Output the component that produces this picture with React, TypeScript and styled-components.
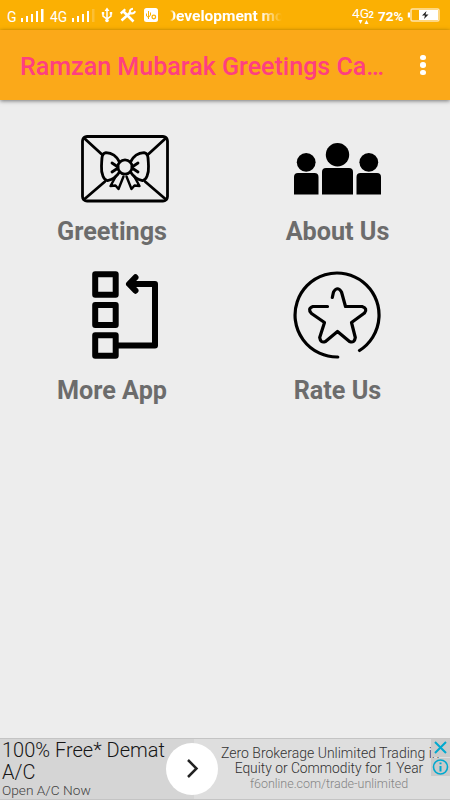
import React from "react";
import styled, { createGlobalStyle } from "styled-components";

const GlobalStyle = createGlobalStyle`
  * { box-sizing: border-box; }
  html, body { margin: 0; padding: 0; }
  body { font-family: Roboto, "Liberation Sans", sans-serif; background: #ededed; }
  svg { display: block; flex: none; }
`;

const Screen = styled.div`
  width: 450px;
  height: 800px;
  display: flex;
  flex-direction: column;
  overflow: hidden;
  background: #ededed;
`;

const StatusBar = styled.header`
  height: 30px;
  flex: none;
  display: flex;
  align-items: flex-start;
  background: #fbb003;
  color: #fff;
`;

const StatusText = styled.span<{ $left: number; $width: number; $size: number; $weight?: number; $top?: number }>`
  margin-left: ${(p) => p.$left}px;
  margin-top: ${(p) => p.$top ?? 7}px;
  width: ${(p) => p.$width}px;
  flex: none;
  font-size: ${(p) => p.$size}px;
  font-weight: ${(p) => p.$weight ?? 400};
  line-height: 18px;
  white-space: nowrap;
`;

const Ticker = styled.span`
  display: flex;
  width: 112px;
  margin: 7px 0 0 11px;
  overflow: hidden;
  font-size: 15.5px;
  font-weight: 700;
  line-height: 18px;
  white-space: nowrap;
  mask-image: linear-gradient(to right, transparent 0, #000 4px, #000 90px, transparent 112px);
`;

const TickerText = styled.span`
  margin-left: -4px;
`;

const StatusIcon = styled.svg<{ $left: number }>`
  margin-left: ${(p) => p.$left}px;
`;

const AppBar = styled.div`
  height: 70px;
  flex: none;
  display: flex;
  align-items: center;
  padding: 4px 24px 0 20px;
  background: #fba919;
  box-shadow: 0 1px 4px rgba(0, 0, 0, 0.5);
`;

const Title = styled.h1`
  margin: 0;
  flex: 1;
  color: #ff3f80;
  font-size: 25.05px;
  font-weight: 500;
  line-height: 32px;
  white-space: nowrap;
`;

const MenuButton = styled.button`
  display: flex;
  flex-direction: column;
  gap: 2px;
  padding: 0;
  margin-top: -4px;
  border: 0;
  background: none;
`;

const Dot = styled.i`
  width: 5.6px;
  height: 5.6px;
  border-radius: 50%;
  background: #fff;
`;

const Menu = styled.main`
  flex: 1;
  display: grid;
  grid-template-columns: 224px 227px;
  grid-template-rows: 159px 159px;
  padding-top: 20px;
`;

const Item = styled.div`
  display: flex;
  flex-direction: column;
  align-items: center;
`;

const ItemIcon = styled.svg<{ $shift?: number; $rise?: number }>`
  margin: ${(p) => 4 - (p.$rise ?? 0)}px 0 ${(p) => p.$rise ?? 0}px ${(p) => p.$shift ?? 0}px;
`;

const Label = styled.span`
  margin-top: 1.6px;
  color: #6c6c6c;
  font-size: 25.2px;
  font-weight: 700;
  line-height: 32px;
  white-space: nowrap;
`;

const Ad = styled.footer`
  position: relative;
  height: 62px;
  flex: none;
  display: flex;
  border-top: 1px solid #c4c4c4;
  border-bottom: 1px solid #c4c4c4;
  font-weight: 300;
  white-space: nowrap;
`;

const AdLead = styled.div`
  width: 194px;
  padding-left: 2px;
  background: #d5d5d5;
  color: #161616;
`;

const AdHeadline = styled.div`
  font-size: 20px;
  line-height: 22px;
`;

const AdNote = styled.div`
  color: #444;
  font-size: 13.7px;
  line-height: 15px;
`;

const AdBody = styled.div`
  flex: 1;
  display: flex;
  flex-direction: column;
  align-items: center;
  padding: 7px 0 0 14px;
  background: #dedede;
  color: #333;
  font-size: 13.8px;
  line-height: 15px;
  overflow: hidden;
`;

const AdLine = styled.div<{ $muted?: boolean }>`
  color: ${(p) => (p.$muted ? "#858585" : "#303030")};
  font-size: ${(p) => (p.$muted ? 12.5 : 13.8)}px;
  letter-spacing: ${(p) => (p.$muted ? -0.02 : 0)}px;
`;

const AdClip = styled.div`
  width: 216px;
  font-size: 14px;
`;

const AdGo = styled.button`
  position: absolute;
  left: 166px;
  top: 4px;
  width: 52px;
  height: 52px;
  padding: 0;
  border: 0;
  border-radius: 50%;
  background: #fff;
`;

const AdControls = styled.div`
  position: absolute;
  top: 0;
  right: 0;
  display: grid;
  gap: 1px;
`;

const AdControl = styled.span`
  width: 19px;
  height: 18px;
  background: #cacaca;
`;

function SignalBars({ left, weak }: { left: number; weak?: boolean }) {
  return (
    <StatusIcon $left={left} width="23" height="30" fill="#fff">
      <rect x="0" y="18" width="2" height="4" />
      <rect x="5" y="16" width="2" height="6" />
      <rect x="10" y="14" width="2" height="8" />
      <rect x="15" y="11" width="2" height="11" />
      <rect x="20" y="9" width="2.500" height="13" opacity={weak ? 0.2 : 1} />
    </StatusIcon>
  );
}

function EnvelopeIcon() {
  return (
    <ItemIcon $shift={26} width="90" height="90" viewBox="80 124 90 90" fill="none" stroke="#000" strokeWidth="2.800" strokeLinejoin="round" strokeLinecap="round">
      <rect x="82.500" y="136.500" width="85" height="64.500" rx="4.500" />
      <path d="M84 138 102 154.500M166 138 148 154.500M84 199.500 105 181.500M166 199.500 145 181.500" />
      <circle cx="125" cy="167" r="7.200" />
      <path d="M119.500 162C117 157 112 153 106 152.700C101 153.500 102 159 101.500 166C101 174 104 180.500 107.500 180.700C113 179.500 117 176 119.500 172M130.500 162C133 157 138 153 144 152.700C149 153.500 148 159 148.500 166C149 174 146 180.500 142.500 180.700C137 179.500 133 176 130.500 172" />
      <path d="M112 163 118 167M112 172 118 168M138 163 132 167M138 172 132 168" />
      <path d="M116 176 110.500 186 115.500 185.500 118.500 189 123.500 176.500M134 176 139.500 186 134.500 185.500 131.500 189 126.500 176.500" strokeWidth="2.400" />
    </ItemIcon>
  );
}

function PeopleIcon() {
  return (
    <ItemIcon width="90" height="90" viewBox="293 124 90 90">
      <circle cx="306.200" cy="162.300" r="9.400" />
      <circle cx="337.500" cy="154.700" r="11.700" />
      <circle cx="368.800" cy="162.300" r="9.400" />
      <path d="M294 194.500V177q0-4 4-4h16.500q4 0 4 4v17.500zM322 194.500V172q0-4 4-4h23q4 0 4 4v22.500zM356.500 194.500V177q0-4 4-4H377q4 0 4 4v17.500z" />
    </ItemIcon>
  );
}

function FlowIcon() {
  return (
    <ItemIcon $shift={26} $rise={13} width="90" height="90" viewBox="80 270 90 90" fill="none" stroke="#000" strokeWidth="6" strokeLinejoin="round" strokeLinecap="round">
      <rect x="95.200" y="274.200" width="20.500" height="20.500" />
      <rect x="95.200" y="305" width="20.500" height="20" />
      <rect x="95.200" y="335.300" width="20.500" height="20.500" />
      <path d="M118 345.500H155V284H130M135.500 277.300 129 284 135.500 290.700" />
    </ItemIcon>
  );
}

function StarIcon() {
  return (
    <ItemIcon $rise={13} width="90" height="90" viewBox="293 270 90 90" fill="none" stroke="#000" strokeWidth="3.200" strokeLinejoin="round" strokeLinecap="round">
      <path d="M337.800 357A42 42 0 1 1 359.500 350.500" />
      <path d="M332.300 297.500 333.500 292Q337.500 285.500 341.500 292L345.500 306.500H362Q368 308.500 364.500 313L351.500 322.500 355.300 337.500Q354.500 343.500 349.500 341.500L337.500 331.500 325.500 341.500Q320.500 343.500 319.700 337.500L324.500 322.500 311.500 313.500Q307 308.500 313 306.500H327.500" />
    </ItemIcon>
  );
}

export default function App() {
  return (
    <>
      <GlobalStyle />
      <Screen>
        <StatusBar>
          <StatusText $left={7} $width={14} $size={14} $top={8}>G</StatusText>
          <SignalBars left={0} />
          <StatusText $left={6} $width={22} $size={13.8} $top={8}>4G</StatusText>
          <SignalBars left={0} weak />
          <StatusIcon $left={6} width="12" height="30" viewBox="101 0 12 30" fill="none" stroke="#fff" strokeWidth="1.500">
            <path d="M107 10V21M103 13V16L107 19 111 16V12.500" />
            <path d="M104.500 11 107 7.500 109.500 11zM101.800 12h2.400v2.500h-2.400zM109.800 12h2.400v2.500h-2.400z" fill="#fff" stroke="none" />
            <circle cx="107" cy="20.500" r="1.800" fill="#fff" stroke="none" />
          </StatusIcon>
          <StatusIcon $left={6} width="18" height="30" viewBox="119 0 18 30" fill="none" stroke="#fff" strokeWidth="2.600">
            <path d="M121.500 20.500 131 12M123.500 11.500 133.500 21.500" />
            <path d="M120 12.500 124.500 8.500 126 10 121.500 14.500z" fill="#fff" stroke="none" />
            <path d="M133 8.800Q129.500 9 129.800 13Q133.500 14.500 135.300 11.300" strokeWidth="2" />
          </StatusIcon>
          <StatusIcon $left={6} width="16" height="30" viewBox="143 0 16 30">
            <rect x="144" y="8" width="14" height="14" rx="2.500" fill="#fff" />
            <path d="M148.500 11V19M146.500 13.500V16L148.500 17.500 150.500 15V12.500" fill="none" stroke="#fbb003" />
            <circle cx="153.800" cy="17" r="1.800" fill="none" stroke="#fbb003" strokeWidth="1.300" />
          </StatusIcon>
          <Ticker><TickerText>Development mo</TickerText></Ticker>
          <StatusIcon $left={70} width="24" height="30" viewBox="352 0 24 30" fill="#fff" fontFamily="Roboto, sans-serif">
            <text x="352" y="18" fontSize="13.700">4G</text>
            <text x="368.500" y="18" fontSize="9.500" fontWeight="700">2</text>
            <path d="M358.500 20h4l-2 4zM364.500 24h4l-2-4z" />
          </StatusIcon>
          <StatusText $left={2} $width={29} $size={13.6} $weight={700}>72%</StatusText>
          <StatusIcon $left={0} width="34" height="30" viewBox="407 0 34 30">
            <path d="M410 12.500h-2.200v5H410z" fill="#fff" />
            <rect x="411" y="9" width="28" height="12" rx="1.500" fill="none" stroke="#ffe3ab" strokeWidth="1.500" />
            <rect x="419" y="10" width="19" height="10" fill="#fff" />
            <path d="M426.500 11 422 15.500H425L424 19 428.500 14.500H425.500z" fill="#222" />
          </StatusIcon>
        </StatusBar>
        <AppBar>
          <Title>Ramzan Mubarak Greetings Ca…</Title>
          <MenuButton aria-label="More options"><Dot /><Dot /><Dot /></MenuButton>
        </AppBar>
        <Menu>
          <Item><EnvelopeIcon /><Label>Greetings</Label></Item>
          <Item><PeopleIcon /><Label>About Us</Label></Item>
          <Item><FlowIcon /><Label>More App</Label></Item>
          <Item><StarIcon /><Label>Rate Us</Label></Item>
        </Menu>
        <Ad>
          <AdLead>
            <AdHeadline>100% Free* Demat<br />A/C</AdHeadline>
            <AdNote>Open A/C Now</AdNote>
          </AdLead>
          <AdBody>
            <AdClip>Zero Brokerage Unlimited Trading in</AdClip>
            <AdLine>Equity or Commodity for 1 Year</AdLine>
            <AdLine $muted>f6online.com/trade-unlimited</AdLine>
          </AdBody>
          <AdGo aria-label="Open">
            <svg width="52" height="52" fill="none" stroke="#222" strokeWidth="2.500"><path d="M22 17 30.500 25.500 22 34" /></svg>
          </AdGo>
          <AdControls>
            <AdControl><svg width="19" height="18" stroke="#00a9cf" strokeWidth="2"><path d="M4 3 15 14M15 3 4 14" /></svg></AdControl>
            <AdControl><svg width="19" height="18" fill="none" stroke="#00a9cf" strokeWidth="1.600"><circle cx="9.500" cy="9" r="7" /><path d="M9.500 8V13.500M9.500 4.500V6.300" strokeWidth="2" /></svg></AdControl>
          </AdControls>
        </Ad>
      </Screen>
    </>
  );
}
